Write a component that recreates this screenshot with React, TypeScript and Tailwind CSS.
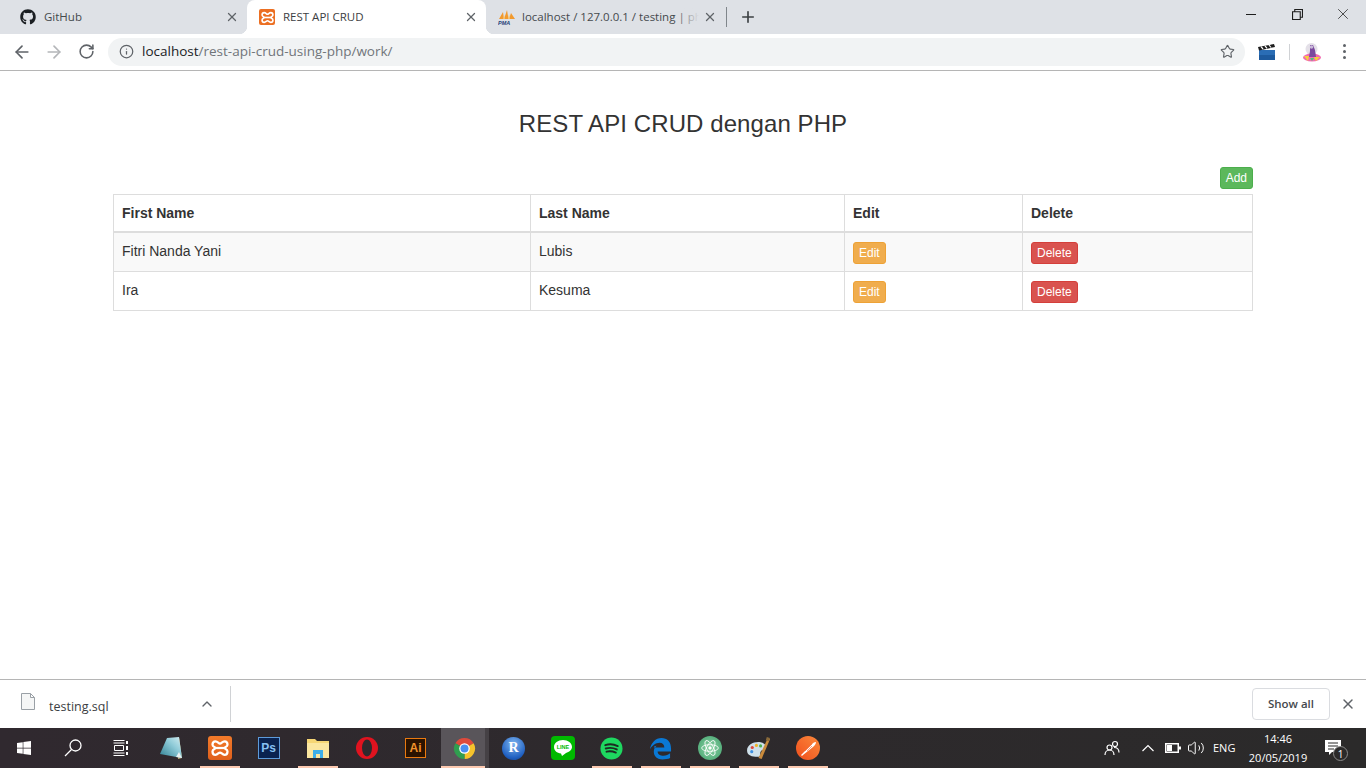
import { ArrowLeft, ArrowRight, ChevronUp, Info, Plus, RotateCw, Star, Volume2, X } from 'lucide-react'
import { FaGithub, FaWindows } from 'react-icons/fa'

function XamppIcon({ box, glyph }: { box: string; glyph: string }) {
  return (
    <span className={`flex items-center justify-center ${box}`}>
      <svg viewBox="0 0 24 24" className={glyph} fill="none" stroke="#fff" strokeWidth="3">
        <path d="M6 3c3 0 4 3 6 3s3-3 6-3c3 0 4 2 4 4.500 0 3-4 3-4 4.500s4 1.500 4 4.500c0 2.500-1 4.500-4 4.500-3 0-4-3-6-3s-3 3-6 3c-3 0-4-2-4-4.500 0-3 4-3 4-4.500S2 10.500 2 7.500C2 5 3 3 6 3z" />
        <path d="M6 12h12" />
      </svg>
    </span>
  )
}

function PmaIcon() {
  return (
    <svg viewBox="0 0 18 16" className="h-4 w-[18px]">
      <path d="M1 10 5 3l1 7zM6 10l3-9 1.500 9zM11 10l2-6 4 6z" fill="#f29a2e" />
      <path d="M5 10l1-4 1 4zM10 10l1-5 1 5z" fill="#f6c26b" />
      <text x="0" y="15.500" fontSize="5.500" fontWeight="700" fontStyle="italic" fill="#1f3f77" fontFamily="'Liberation Sans', sans-serif">
        PMA
      </text>
    </svg>
  )
}

function ChromeTab({ title, icon, active, fade }: { title: string; icon: React.ReactNode; active?: boolean; fade?: boolean }) {
  return (
    <div className={`relative flex h-[34px] w-[239px] items-center pl-3 pr-2 ${active ? 'rounded-t-lg bg-white text-[#3c4043]' : 'text-[#45494d]'}`}>
      {active && <span className="absolute bottom-0 -left-2 h-2 w-2 bg-[radial-gradient(circle_at_0_0,#dee1e6_8px,#ffffff_8.500px)]" />}
      {active && <span className="absolute bottom-0 -right-2 h-2 w-2 bg-[radial-gradient(circle_at_100%_0,#dee1e6_8px,#ffffff_8.500px)]" />}
      <span className="flex w-6 shrink-0">{icon}</span>
      <span className="relative flex-1 overflow-hidden whitespace-nowrap text-[11.500px]">
        {title}
        {fade && <span className="absolute inset-y-0 right-0 w-6 bg-gradient-to-r from-transparent to-[#dee1e6]" />}
      </span>
      <X size={14} strokeWidth={2.200} className="ml-1 shrink-0 text-[#5f6368]" />
    </div>
  )
}

function TabStrip() {
  return (
    <div className="flex h-[34px] items-center bg-[#dee1e6]">
      <div className="ml-2 flex">
        <ChromeTab title="GitHub" icon={<FaGithub size={16} className="text-[#1b1f23]" />} />
        <ChromeTab title="REST API CRUD" icon={<XamppIcon box="h-4 w-4 rounded-[2px] bg-[#ec6f22]" glyph="h-[13px] w-[13px]" />} active />
        <ChromeTab title="localhost / 127.0.0.1 / testing | phpMyAdmin" icon={<PmaIcon />} fade />
      </div>
      <span className="ml-px h-5 w-px bg-[#80868b]" />
      <Plus size={18} strokeWidth={2.200} className="ml-[12px] text-[#3c4043]" />
      <div className="ml-auto flex h-full text-[#1d1d1d]">
        <span className="flex w-[46px] items-center justify-center pb-[6px]">
          <span className="h-px w-[10px] bg-[#1d1d1d]" />
        </span>
        <span className="flex w-[46px] items-center justify-center pb-[6px]">
          <svg viewBox="0 0 10 10" className="h-[11px] w-[11px]" fill="none" stroke="currentColor">
            <path d="M.5 2.500h7v7h-7zM2.500 2.500v-2h7v7h-2" />
          </svg>
        </span>
        <span className="flex w-[46px] items-center justify-center pb-[6px]">
          <X size={18} strokeWidth={1} />
        </span>
      </div>
    </div>
  )
}

function Toolbar() {
  return (
    <div className="flex h-[37px] items-center border-b border-[#b5b5b5] bg-white pb-[1px]">
      <div className="flex w-[108px] shrink-0 items-center pl-3 text-[#5f6368]">
        <ArrowLeft size={20} strokeWidth={2} />
        <ArrowRight size={20} strokeWidth={2} className="ml-3 text-[#b4b6b9]" />
        <RotateCw size={17} strokeWidth={2.200} className="ml-[14px]" />
      </div>
      <div className="flex h-7 flex-1 items-center rounded-full bg-[#f1f3f4] pl-[11px] pr-[10px]">
        <Info size={15} strokeWidth={2} className="text-[#5f6368]" />
        <span className="ml-2 text-[13.500px] text-[#202124]">
          localhost<span className="text-[#70757a]">/rest-api-crud-using-php/work/</span>
        </span>
        <Star size={15} strokeWidth={1.800} className="ml-auto text-[#5f6368]" />
      </div>
      <div className="flex w-[121px] shrink-0 items-center pl-[13px]">
        <svg viewBox="0 0 18 16" className="h-4 w-[18px]">
          <rect x="1" y="6" width="16" height="10" fill="#2a6db5" />
          <rect x="1" y="11" width="16" height="5" fill="#1d5a9e" />
          <path d="M0 3 16 0l1 3L1 6.500z" fill="#1c1c1c" />
          <path d="M3 2.600 5 5M7 1.800 9 4.300M11 1 13 3.500" stroke="#fff" strokeWidth="1.200" />
        </svg>
        <span className="ml-[13px] h-[16px] w-px bg-[#d0d2d5]" />
        <svg viewBox="0 0 20 20" className="ml-3 h-5 w-5">
          <circle cx="9.500" cy="7" r="6" fill="#e4e0e8" />
          <ellipse cx="10" cy="15.500" rx="9" ry="4" fill="#f26ab0" />
          <path d="M2 14h5l-1 5zM12 15h6l-4 4z" fill="#f4d23a" />
          <path d="M8 16h4l-2 3z" fill="#46c87a" />
          <path d="M8 3h3l2 5 1 7H7l1-6z" fill="#7a4a9e" />
          <circle cx="9.500" cy="5" r="1.800" fill="#c9b8d8" />
        </svg>
        <span className="ml-[21px] flex flex-col gap-[3px]">
          <span className="h-[3px] w-[3px] rounded-full bg-[#5f6368]" />
          <span className="h-[3px] w-[3px] rounded-full bg-[#5f6368]" />
          <span className="h-[3px] w-[3px] rounded-full bg-[#5f6368]" />
        </span>
      </div>
    </div>
  )
}

const rows = [
  { first: 'Fitri Nanda Yani', last: 'Lubis' },
  { first: 'Ira', last: 'Kesuma' },
]

function CrudPage() {
  return (
    <div className="flex-1 overflow-hidden bg-white font-['Liberation_Sans',sans-serif] text-sm text-[#333333]">
      <div className="mx-auto w-[1140px]">
        <h2 className="mt-[39px] text-center text-2xl leading-[27px] tracking-[0.085px]">REST API CRUD dengan PHP</h2>
        <div className="mt-[30px] flex justify-end">
          <button className="rounded-[3px] border border-[#4cae4c] bg-[#5cb85c] px-[5px] py-px text-xs leading-[18px] text-white">Add</button>
        </div>
        <table className="mt-[5px] w-[1139px] table-fixed border-collapse border border-[#dddddd] leading-5">
          <colgroup>
            <col className="w-[417px]" />
            <col className="w-[314px]" />
            <col className="w-[178px]" />
            <col className="w-[230px]" />
          </colgroup>
          <thead>
            <tr className="border-b-2 border-[#dddddd] text-left">
              <th className="border border-b-2 border-[#dddddd] p-2">First Name</th>
              <th className="border border-b-2 border-[#dddddd] p-2">Last Name</th>
              <th className="border border-b-2 border-[#dddddd] p-2">Edit</th>
              <th className="border border-b-2 border-[#dddddd] p-2">Delete</th>
            </tr>
          </thead>
          <tbody>
            {rows.map((row, i) => (
              <tr key={row.first} className={i % 2 === 0 ? 'bg-[#f9f9f9]' : ''}>
                <td className="border border-[#dddddd] p-2 align-top">{row.first}</td>
                <td className="border border-[#dddddd] p-2 align-top">{row.last}</td>
                <td className="border border-[#dddddd] px-2 pb-[7px] pt-[9px] align-top">
                  <button className="block rounded-[3px] border border-[#eea236] bg-[#f0ad4e] px-[5px] py-px text-xs leading-[18px] text-white">Edit</button>
                </td>
                <td className="border border-[#dddddd] px-2 pb-[7px] pt-[9px] align-top">
                  <button className="block rounded-[3px] border border-[#d43f3a] bg-[#d9534f] px-[5px] py-px text-xs leading-[18px] text-white">Delete</button>
                </td>
              </tr>
            ))}
          </tbody>
        </table>
      </div>
    </div>
  )
}

function DownloadShelf() {
  return (
    <div className="flex h-[49px] items-center border-t border-[#b5b5b5] bg-white">
      <div className="flex w-[230px] shrink-0 items-center">
        <svg viewBox="0 0 14 17" className="mb-[5px] ml-[21px] h-[17px] w-[14px]" fill="#f5f6f6" stroke="#9aa0a6">
          <path d="M.5.500h9l4 4v12H.500zM9.500.500v4h4" />
        </svg>
        <span className="ml-[14px] pt-[7px] text-[12.500px] text-[#3c4043]">testing.sql</span>
        <ChevronUp size={16} strokeWidth={2} className="ml-auto mr-[15px] text-[#5f6368]" />
      </div>
      <span className="h-9 w-px bg-[#d0d2d5]" />
      <button className="ml-auto h-8 w-[78px] rounded-[4px] border border-[#dadce0] text-[11.500px] font-semibold text-[#45494d]">Show all</button>
      <X size={16} strokeWidth={2.200} className="mx-[10px] text-[#5f6368]" />
    </div>
  )
}

function TaskButton({ children, running, hover, width = 'w-[49px]' }: { children: React.ReactNode; running?: boolean; hover?: boolean; width?: string }) {
  return (
    <div className={`relative flex h-10 shrink-0 items-center justify-center ${width}`}>
      {hover && <span className="absolute inset-y-0 left-px right-1 bg-[#59555a]" />}
      {hover && <span className="absolute inset-y-0 right-0 w-1 bg-[#454145]" />}
      <span className="relative flex">{children}</span>
      {running && <span className={`absolute bottom-0 h-[2px] bg-[#fcc9b0] ${hover ? 'left-px right-1' : 'left-[5px] right-1'}`} />}
    </div>
  )
}

function Taskbar() {
  return (
    <div className="flex h-10 items-center bg-gradient-to-r from-[#30292f] to-[#2b2a2a] font-['Open_Sans',sans-serif] text-[11px] text-white">
      <TaskButton width="w-12">
        <FaWindows size={16} />
      </TaskButton>
      <TaskButton>
        <svg viewBox="0 0 18 18" className="h-[18px] w-[18px]" fill="none" stroke="#fff" strokeWidth="1.300">
          <circle cx="11.500" cy="6.500" r="5.500" />
          <path d="M7.500 10.500 1 17" />
        </svg>
      </TaskButton>
      <TaskButton>
        <svg viewBox="0 0 17 16" className="h-4 w-[17px]" fill="none" stroke="#fff">
          <path d="M.5 3h11M.5 13h11M1.500 5.500h9v5h-9zM.5 15.500h11M.5.500h11" />
          <path d="M14 1v3M14 6v4M14 12v3" strokeWidth="2" />
        </svg>
      </TaskButton>
      <TaskButton>
        <svg viewBox="0 0 24 24" className="h-6 w-6">
          <defs>
            <linearGradient id="notes" x1="0" y1="1" x2="1" y2="0">
              <stop offset="0" stopColor="#2e7f92" />
              <stop offset="0.600" stopColor="#8fcbd8" />
              <stop offset="1" stopColor="#d4eef2" />
            </linearGradient>
          </defs>
          <path d="M20 1l3 21-4 1z" fill="#c9b57a" />
          <path d="M8 2 20 1l3 21L1 18z" fill="url(#notes)" />
          <path d="M20 16l3 6-6-1z" fill="#e8f0f0" />
        </svg>
      </TaskButton>
      <TaskButton running>
        <XamppIcon box="h-6 w-6 rounded-[3px] bg-gradient-to-b from-[#f27a2a] to-[#e0601c]" glyph="h-[18px] w-[18px]" />
      </TaskButton>
      <TaskButton>
        <span className="flex h-[22px] w-[22px] items-center justify-center border border-[#5d9bdb] bg-[#0a2350] font-['Liberation_Sans',sans-serif] text-[12px] font-bold text-[#86c0f2]">Ps</span>
      </TaskButton>
      <TaskButton running>
        <svg viewBox="0 0 24 22" className="h-[22px] w-6">
          <path d="M1 2h8l2 2h12v17H1z" fill="#f6d675" />
          <path d="M1 6h22v15H1z" fill="#fbe6a0" />
          <path d="M7 13h10v8h-3v-4h-4v4H7z" fill="#3daee9" />
        </svg>
      </TaskButton>
      <TaskButton>
        <svg viewBox="0 0 24 24" className="h-6 w-6">
          <circle cx="12" cy="12" r="11" fill="#e0131f" />
          <ellipse cx="12" cy="12" rx="5" ry="8.500" fill="#2e2a2e" />
        </svg>
      </TaskButton>
      <TaskButton>
        <span className="flex h-5 w-[21px] items-center justify-center border border-[#ea7a10] bg-[#2b1300] font-['Liberation_Sans',sans-serif] text-[12px] font-bold text-[#f2932b]">Ai</span>
      </TaskButton>
      <TaskButton running hover>
        <svg viewBox="0 0 24 24" className="h-[23px] w-[23px]">
          <path d="M12 12 2.470 6.500A11 11 0 0 1 21.530 6.500Z" fill="#de4a3c" />
          <path d="M12 12 21.530 6.500A11 11 0 0 1 12 23Z" fill="#f6c32c" />
          <path d="M12 12 12 23A11 11 0 0 1 2.470 6.500Z" fill="#2f9e4f" />
          <circle cx="12" cy="12" r="5.500" fill="#fff" />
          <circle cx="12" cy="12" r="4.200" fill="#4a8ef0" />
        </svg>
      </TaskButton>
      <TaskButton>
        <span className="flex h-[23px] w-[23px] items-center justify-center rounded-full bg-[radial-gradient(circle_at_50%_30%,#7fb6f0,#1f5fc0_70%,#123a80)] font-['Liberation_Serif',serif] text-sm font-bold text-white">R</span>
      </TaskButton>
      <TaskButton>
        <span className="relative flex h-6 w-6 items-center justify-center rounded-[4px] bg-[#00b900]">
          <svg viewBox="0 0 20 18" className="h-[18px] w-5">
            <path d="M10 1C5 1 1 4 1 8c0 3.500 3 6 7 6.500l1 2.500 4-3c3-1 6-3 6-6 0-4-4-7-9-7z" fill="#fff" />
            <text x="10" y="10" textAnchor="middle" fontSize="5.500" fontWeight="700" fill="#00b900" fontFamily="'Liberation Sans', sans-serif">
              LINE
            </text>
          </svg>
        </span>
      </TaskButton>
      <TaskButton running>
        <svg viewBox="0 0 24 24" className="h-[23px] w-[23px]">
          <circle cx="12" cy="12" r="11.500" fill="#1ed760" />
          <path d="M5.500 8.500c4-1.300 9-1 13 1M6 12c3.500-1 8-.7 11.500 1M6.800 15.300c3-.8 6.500-.5 9.700 1" fill="none" stroke="#1c2a22" strokeWidth="2" strokeLinecap="round" />
        </svg>
      </TaskButton>
      <TaskButton running>
        <svg viewBox="0 0 24 24" className="h-[23px] w-[23px]">
          <path d="M1 13C2 6 7 1 13 1c6 0 10 4 10 11v3H9c0 3 3 4.500 6 4.500 3 0 5-1 7-2.500v5c-2 1-5 1.500-8 1.500-5 0-9-3-9-8 0-3 1-5 3-6.500C6 9 5 10 5 11h11c0-3-2-5-5-5-4 0-8 3-10 7z" fill="#0a78d4" />
        </svg>
      </TaskButton>
      <TaskButton running>
        <span className="flex h-6 w-6 items-center justify-center rounded-full bg-[radial-gradient(circle,#8fd6a8,#3f9e6a)]">
          <svg viewBox="0 0 24 24" className="h-5 w-5" fill="none" stroke="#fff" strokeWidth="1">
            <ellipse cx="12" cy="12" rx="10" ry="4" />
            <ellipse cx="12" cy="12" rx="10" ry="4" transform="rotate(60 12 12)" />
            <ellipse cx="12" cy="12" rx="10" ry="4" transform="rotate(120 12 12)" />
            <circle cx="12" cy="12" r="1.500" fill="#fff" />
          </svg>
        </span>
      </TaskButton>
      <TaskButton running>
        <svg viewBox="0 0 24 24" className="h-[25px] w-[25px]">
          <path d="M1 14C1 8 8 5 14 6c4 1 6 3 5 6-1 2-4 1-5 3s1 5-3 5c-5 0-10-1-10-6z" fill="#cfe0ea" />
          <circle cx="6" cy="11" r="1.500" fill="#e0483c" />
          <circle cx="10" cy="9" r="1.500" fill="#f0b429" />
          <circle cx="14" cy="9.500" r="1.500" fill="#4caf50" />
          <circle cx="5.500" cy="15" r="1.500" fill="#3f8fe0" />
          <path d="M21 2l2 1-8 19-3-1z" fill="#c98a3c" />
          <path d="M20 1l3 1-1 3-3-1z" fill="#8a6a3a" />
        </svg>
      </TaskButton>
      <TaskButton running>
        <svg viewBox="0 0 24 24" className="h-6 w-6">
          <defs>
            <linearGradient id="feather" x1="0" y1="1" x2="1" y2="0">
              <stop offset="0" stopColor="#f04e1c" />
              <stop offset="1" stopColor="#fb8a3c" />
            </linearGradient>
          </defs>
          <circle cx="12" cy="12" r="12" fill="url(#feather)" />
          <path d="M5 19 15 9c2-2 3-3 5-3 0 2-1 3-3 5L7 19l-1 1z" fill="#fff" />
          <path d="M9 15l7-7M11 15l5-5" stroke="#f6602d" strokeWidth=".6" />
        </svg>
      </TaskButton>

      <div className="ml-auto flex h-full items-center">
        <svg viewBox="0 0 16 16" className="h-4 w-4" fill="none" stroke="#fff" strokeWidth="1.200">
          <circle cx="11" cy="4" r="2.500" />
          <circle cx="5.500" cy="7.500" r="2.500" />
          <path d="M1 15c0-3 2-5 4.500-5S10 12 10 15M10 7.500c3 0 5 2 5 5" />
        </svg>
        <svg viewBox="0 0 12 7" className="ml-[22px] h-[8px] w-3" fill="none" stroke="#fff" strokeWidth="1.200">
          <path d="M.5 6.500 6 1l5.500 5.500" />
        </svg>
        <svg viewBox="0 0 16 10" className="ml-[11px] h-[10px] w-4">
          <path d="M.75.750h12.500v8.500H.750z" fill="none" stroke="#fff" strokeWidth="1.500" />
          <path d="M2 2h5v6H2zM14 3.500h2v3h-2z" fill="#fff" />
        </svg>
        <Volume2 size={18} strokeWidth={1.300} className="ml-[6px]" />
        <span className="ml-2 w-6">ENG</span>
        <div className="ml-[9px] flex w-16 flex-col items-center leading-[18px]">
          <span>14:46</span>
          <span className="mt-px">20/05/2019</span>
        </div>
        <div className="relative ml-[15px] mr-[25px]">
          <svg viewBox="0 0 16 16" className="h-4 w-4">
            <path d="M0 0h16v12H7l-3 3v-3H0z" fill="#fff" />
            <path d="M3 3h10M3 6h10M3 9h6" stroke="#2b2a2a" />
          </svg>
          <span className="absolute -bottom-[5px] -right-[7px] flex h-[15px] w-[15px] items-center justify-center rounded-full border border-[#8a8a8a] bg-[#2b2a2a] text-[10px] leading-none">1</span>
        </div>
      </div>
    </div>
  )
}

export default function App() {
  return (
    <div className="flex h-[768px] flex-col overflow-hidden font-['Open_Sans',sans-serif]">
      <TabStrip />
      <Toolbar />
      <CrudPage />
      <DownloadShelf />
      <Taskbar />
    </div>
  )
}
